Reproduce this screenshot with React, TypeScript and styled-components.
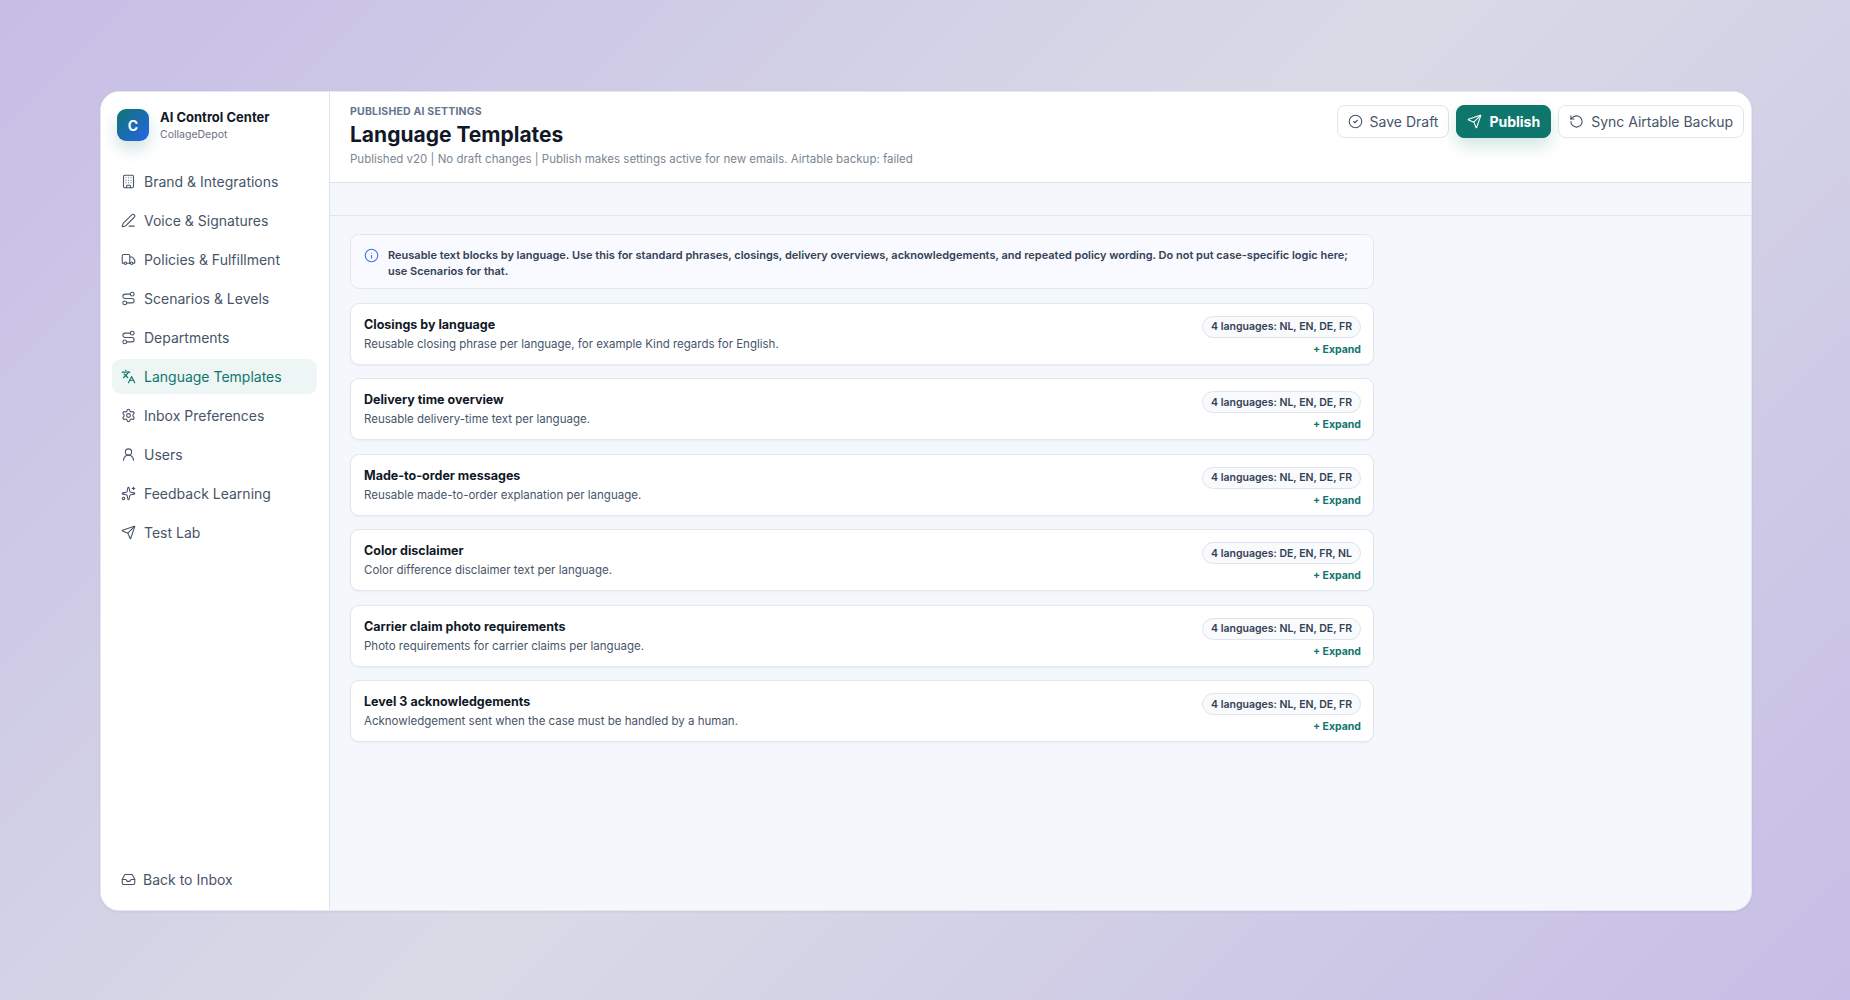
import React from "react";
import styled, { createGlobalStyle } from "styled-components";
import {
  Building,
  PenLine,
  Truck,
  Route,
  Languages,
  Settings,
  UserRound,
  Sparkles,
  Send,
  CircleCheck,
  RotateCcw,
  Inbox,
  Info,
  LucideIcon,
} from "lucide-react";

const Global = createGlobalStyle`
  html, body { margin: 0; padding: 0; height: 100%; }
  body { font-family: Inter, "Liberation Sans", sans-serif; }
  * { box-sizing: border-box; }
`;

const Page = styled.div`
  width: 1850px;
  height: 1000px;
  padding: 91px 98px 89px 100px;
  background: linear-gradient(135deg, #c7bde6 0%, #d8dbe6 50%, #c7bde6 100%);
  overflow: hidden;
`;

const Shell = styled.div`
  display: flex;
  height: 820px;
  border-radius: 19px;
  background: #f4f7fc;
  border: 1px solid #e4e8f0;
  overflow: hidden;
  box-shadow: 0 1px 3px rgba(60, 60, 100, 0.08);
`;

const Sidebar = styled.aside`
  width: 229px;
  flex: none;
  display: flex;
  flex-direction: column;
  background: #fff;
  border-right: 1px solid #dde4ee;
  padding: 17px 12px 13px 11px;
`;

const Brand = styled.div`
  display: flex;
  align-items: center;
  gap: 11px;
  padding-left: 5px;
  height: 32px;
  margin-bottom: 23px;
`;

const Logo = styled.div`
  width: 32px;
  height: 32px;
  border-radius: 9px;
  background: linear-gradient(135deg, #0f766e, #2563eb);
  color: #fff;
  font-weight: 700;
  font-size: 14px;
  display: flex;
  align-items: center;
  justify-content: center;
  box-shadow: 0 8px 16px rgba(15, 118, 110, 0.2);
`;

const BrandText = styled.div`
  display: flex;
  flex-direction: column;
  gap: 2px;
`;

const BrandName = styled.div`
  font-size: 13px;
  font-weight: 700;
  line-height: 17px;
  color: #111827;
`;

const BrandSub = styled.div`
  font-size: 10.5px;
  line-height: 14px;
  color: #6b7280;
`;

const Nav = styled.nav`
  display: flex;
  flex-direction: column;
  gap: 4px;
  flex: 1;
`;

const NavItem = styled.div<{ $active?: boolean }>`
  display: flex;
  align-items: center;
  gap: 8px;
  height: 35px;
  padding-left: 9px;
  border-radius: 9px;
  font-size: 14px;
  color: ${(p) => (p.$active ? "#0f766e" : "#475569")};
  background: ${(p) => (p.$active ? "#edf6f4" : "transparent")};
`;

const BackLink = styled(NavItem)`
  gap: 7px;
`;

const Main = styled.main`
  flex: 1;
  min-width: 0;
  display: flex;
  flex-direction: column;
`;

const Header = styled.header`
  height: 91px;
  flex: none;
  background: #fff;
  border-bottom: 1px solid #dde3ec;
  display: flex;
  justify-content: space-between;
  padding: 13px 7px 0 20px;
`;

const Eyebrow = styled.div`
  font-size: 10.5px;
  line-height: 14px;
  font-weight: 700;
  color: #64748b;
  letter-spacing: 0.2px;
`;

const Title = styled.h1`
  margin: 2px 0 0;
  font-size: 21px;
  line-height: 28px;
  font-weight: 700;
  color: #111827;
`;

const Subtitle = styled.div`
  margin-top: 2px;
  font-size: 11.5px;
  line-height: 16px;
  color: #7b8794;
`;

const Actions = styled.div`
  display: flex;
  align-items: flex-start;
  gap: 7px;
`;

const Button = styled.button<{ $primary?: boolean }>`
  height: 33px;
  display: flex;
  align-items: center;
  gap: 7px;
  padding: 0 10px;
  border-radius: 8px;
  font-family: inherit;
  font-size: 14px;
  font-weight: ${(p) => (p.$primary ? 700 : 400)};
  color: ${(p) => (p.$primary ? "#fff" : "#475569")};
  background: ${(p) => (p.$primary ? "#0f766e" : "#fff")};
  border: 1px solid ${(p) => (p.$primary ? "#0f766e" : "#dfe5ee")};
  box-shadow: ${(p) =>
    p.$primary ? "0 8px 16px rgba(15, 118, 110, 0.18)" : "none"};
`;

const SubBar = styled.div`
  height: 33px;
  flex: none;
  border-bottom: 1px solid #e2e7ef;
`;

const Content = styled.div`
  flex: 1;
  padding: 18px 0 0 20px;
  display: flex;
  flex-direction: column;
  gap: 13.5px;
  width: 1044px;
`;

const Notice = styled.div`
  display: flex;
  gap: 9px;
  height: 55px;
  padding: 12px 20px 0 13px;
  background: #f8faff;
  border: 1px solid #dfe7f5;
  border-radius: 9px;
  font-size: 11px;
  line-height: 16px;
  font-weight: 600;
  color: #334155;
`;

const NoticeIcon = styled(Info)`
  flex: none;
  color: #3b72e8;
  margin-top: 1px;
`;

const Card = styled.div`
  height: 62px;
  flex: none;
  display: flex;
  justify-content: space-between;
  padding: 12px 12px 0 13px;
  background: #fff;
  border: 1px solid #e2e7ef;
  border-radius: 9px;
  box-shadow: 0 1px 2px rgba(30, 41, 59, 0.05);
`;

const CardTitle = styled.div`
  font-size: 12.5px;
  font-weight: 700;
  line-height: 17px;
  color: #111827;
`;

const CardDesc = styled.div`
  margin-top: 3px;
  font-size: 11.5px;
  line-height: 16px;
  color: #475569;
`;

const CardSide = styled.div`
  display: flex;
  flex-direction: column;
  align-items: flex-end;
  gap: 5px;
`;

const Pill = styled.div`
  height: 22px;
  padding: 0 8px;
  display: flex;
  align-items: center;
  border-radius: 11px;
  border: 1px solid #dfe5ee;
  background: #f8fafc;
  font-size: 10.5px;
  font-weight: 600;
  color: #334155;
`;

const Expand = styled.div`
  font-size: 10.5px;
  font-weight: 700;
  line-height: 14px;
  color: #0f766e;
`;

const nav: [LucideIcon, string][] = [
  [Building, "Brand & Integrations"],
  [PenLine, "Voice & Signatures"],
  [Truck, "Policies & Fulfillment"],
  [Route, "Scenarios & Levels"],
  [Route, "Departments"],
  [Languages, "Language Templates"],
  [Settings, "Inbox Preferences"],
  [UserRound, "Users"],
  [Sparkles, "Feedback Learning"],
  [Send, "Test Lab"],
];

const cards = [
  ["Closings by language", "Reusable closing phrase per language, for example Kind regards for English.", "NL, EN, DE, FR"],
  ["Delivery time overview", "Reusable delivery-time text per language.", "NL, EN, DE, FR"],
  ["Made-to-order messages", "Reusable made-to-order explanation per language.", "NL, EN, DE, FR"],
  ["Color disclaimer", "Color difference disclaimer text per language.", "DE, EN, FR, NL"],
  ["Carrier claim photo requirements", "Photo requirements for carrier claims per language.", "NL, EN, DE, FR"],
  ["Level 3 acknowledgements", "Acknowledgement sent when the case must be handled by a human.", "NL, EN, DE, FR"],
];

export default function App() {
  return (
    <Page>
      <Global />
      <Shell>
        <Sidebar>
          <Brand>
            <Logo>C</Logo>
            <BrandText>
              <BrandName>AI Control Center</BrandName>
              <BrandSub>CollageDepot</BrandSub>
            </BrandText>
          </Brand>
          <Nav>
            {nav.map(([Icon, label]) => (
              <NavItem key={label} $active={label === "Language Templates"}>
                <Icon size={15} strokeWidth={1.75} />
                {label}
              </NavItem>
            ))}
          </Nav>
          <BackLink>
            <Inbox size={15} strokeWidth={1.75} />
            Back to Inbox
          </BackLink>
        </Sidebar>
        <Main>
          <Header>
            <div>
              <Eyebrow>PUBLISHED AI SETTINGS</Eyebrow>
              <Title>Language Templates</Title>
              <Subtitle>
                Published v20 | No draft changes | Publish makes settings active for new emails. Airtable backup: failed
              </Subtitle>
            </div>
            <Actions>
              <Button>
                <CircleCheck size={15} strokeWidth={1.75} />
                Save Draft
              </Button>
              <Button $primary>
                <Send size={15} strokeWidth={1.75} />
                Publish
              </Button>
              <Button>
                <RotateCcw size={15} strokeWidth={1.75} />
                Sync Airtable Backup
              </Button>
            </Actions>
          </Header>
          <SubBar />
          <Content>
            <Notice>
              <NoticeIcon size={15} strokeWidth={1.75} />
              <span>
                Reusable text blocks by language. Use this for standard phrases, closings, delivery overviews, acknowledgements, and repeated policy wording. Do not put case-specific logic here; use Scenarios for that.
              </span>
            </Notice>
            {cards.map(([title, desc, langs]) => (
              <Card key={title}>
                <div>
                  <CardTitle>{title}</CardTitle>
                  <CardDesc>{desc}</CardDesc>
                </div>
                <CardSide>
                  <Pill>4 languages: {langs}</Pill>
                  <Expand>+ Expand</Expand>
                </CardSide>
              </Card>
            ))}
          </Content>
        </Main>
      </Shell>
    </Page>
  );
}
